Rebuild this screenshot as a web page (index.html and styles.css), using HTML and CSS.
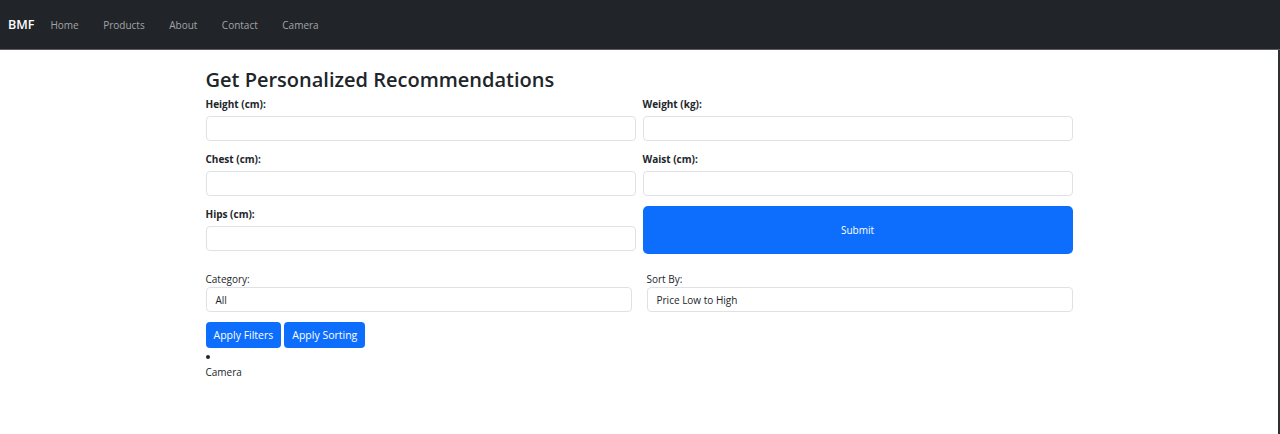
FILE: index.html
```html
<!DOCTYPE html>
<html lang="en">
<head>
<meta charset="utf-8">
<title>BMF - Recommendations</title>
<link rel="stylesheet" href="styles.css">
</head>
<body>
<nav class="navbar">
  <a class="brand" href="#">BMF</a>
  <ul class="nav-links">
    <li><a href="#">Home</a></li>
    <li><a href="#">Products</a></li>
    <li><a href="#">About</a></li>
    <li><a href="#">Contact</a></li>
    <li><a href="#">Camera</a></li>
  </ul>
</nav>
<div class="page">
  <main class="container">
    <h2 class="title">Get Personalized Recommendations</h2>
    <form class="measure-form">
      <div class="field">
        <label class="label-bold">Height (cm):</label>
        <input class="input" type="text">
      </div>
      <div class="field">
        <label class="label-bold">Weight (kg):</label>
        <input class="input" type="text">
      </div>
      <div class="field">
        <label class="label-bold">Chest (cm):</label>
        <input class="input" type="text">
      </div>
      <div class="field">
        <label class="label-bold">Waist (cm):</label>
        <input class="input" type="text">
      </div>
      <div class="field">
        <label class="label-bold">Hips (cm):</label>
        <input class="input" type="text">
      </div>
      <div class="field">
        <button class="submit-btn" type="button">Submit</button>
      </div>
    </form>
    <div class="filters">
      <div class="filter-col">
        <label class="label">Category:</label>
        <div class="select">All</div>
      </div>
      <div class="filter-col">
        <label class="label">Sort By:</label>
        <div class="select">Price Low to High</div>
      </div>
    </div>
    <div class="actions">
      <button class="btn" type="button">Apply Filters</button>
      <button class="btn" type="button">Apply Sorting</button>
    </div>
    <ul class="results">
      <li><div class="result-name">Camera</div></li>
    </ul>
  </main>
</div>
</body>
</html>
```
FILE: styles.css
```css
* { box-sizing: border-box; }
html, body { margin: 0; padding: 0; }
body {
  font-family: "Open Sans", "Noto Sans", sans-serif;
  color: #212529;
  background: #fff;
  height: 434px;
  display: flex;
  flex-direction: column;
}
.navbar {
  height: 50px;
  background: #212529;
  border-bottom: 1px solid #5a5d61;
  display: flex;
  align-items: center;
  padding: 0 0 0 8px;
}
.brand {
  color: #fff;
  text-decoration: none;
  font-size: 12.5px;
  font-weight: 600;
  margin-right: 4px;
}
.nav-links {
  list-style: none;
  margin: 0;
  padding: 0;
  display: flex;
}
.nav-links a {
  display: block;
  padding: 0 12.5px 0 12px;
  color: #a2a4a7;
  text-decoration: none;
  font-size: 10px;
}
.page {
  flex: 1;
  border-right: 2px solid #2e3033;
}
.container {
  width: 867px;
  margin: 0 auto;
  padding-top: 16px;
}
.title {
  font-size: 20px;
  font-weight: 600;
  margin: 0 0 2px;
  line-height: 28px;
}
.measure-form {
  display: grid;
  grid-template-columns: 1fr 1fr;
  column-gap: 7px;
  row-gap: 10px;
}
.field {
  display: flex;
  flex-direction: column;
}
.label-bold, .label {
  font-size: 10px;
  line-height: 15px;
}
.label-bold {
  font-weight: 700;
  padding-top: 1px;
  margin-bottom: 4px;
}
.input {
  height: 25px;
  border: 1px solid #dee2e6;
  border-radius: 4px;
  background: #fff;
  font: inherit;
}
.submit-btn {
  height: 48px;
  border: none;
  border-radius: 5px;
  background: #0d6efd;
  color: #fff;
  font-family: inherit;
  font-size: 10px;
}
.filters {
  display: grid;
  grid-template-columns: 1fr 1fr;
  column-gap: 15px;
  margin-top: 18px;
}
.filter-col {
  display: flex;
  flex-direction: column;
}
.select {
  height: 25px;
  border: 1px solid #dee2e6;
  border-radius: 4px;
  font-size: 10px;
  display: flex;
  align-items: center;
  padding-left: 9px;
}
.actions {
  display: flex;
  gap: 3px;
  margin-top: 10px;
}
.btn {
  height: 26px;
  padding: 0 8px;
  border: none;
  border-radius: 4px;
  background: #0d6efd;
  color: #fff;
  font-family: inherit;
  font-size: 10.5px;
}
.results {
  list-style: disc inside;
  margin: 0;
  padding: 0;
  font-size: 10px;
  line-height: 16px;
}
.result-name { line-height: 16px; }
```
